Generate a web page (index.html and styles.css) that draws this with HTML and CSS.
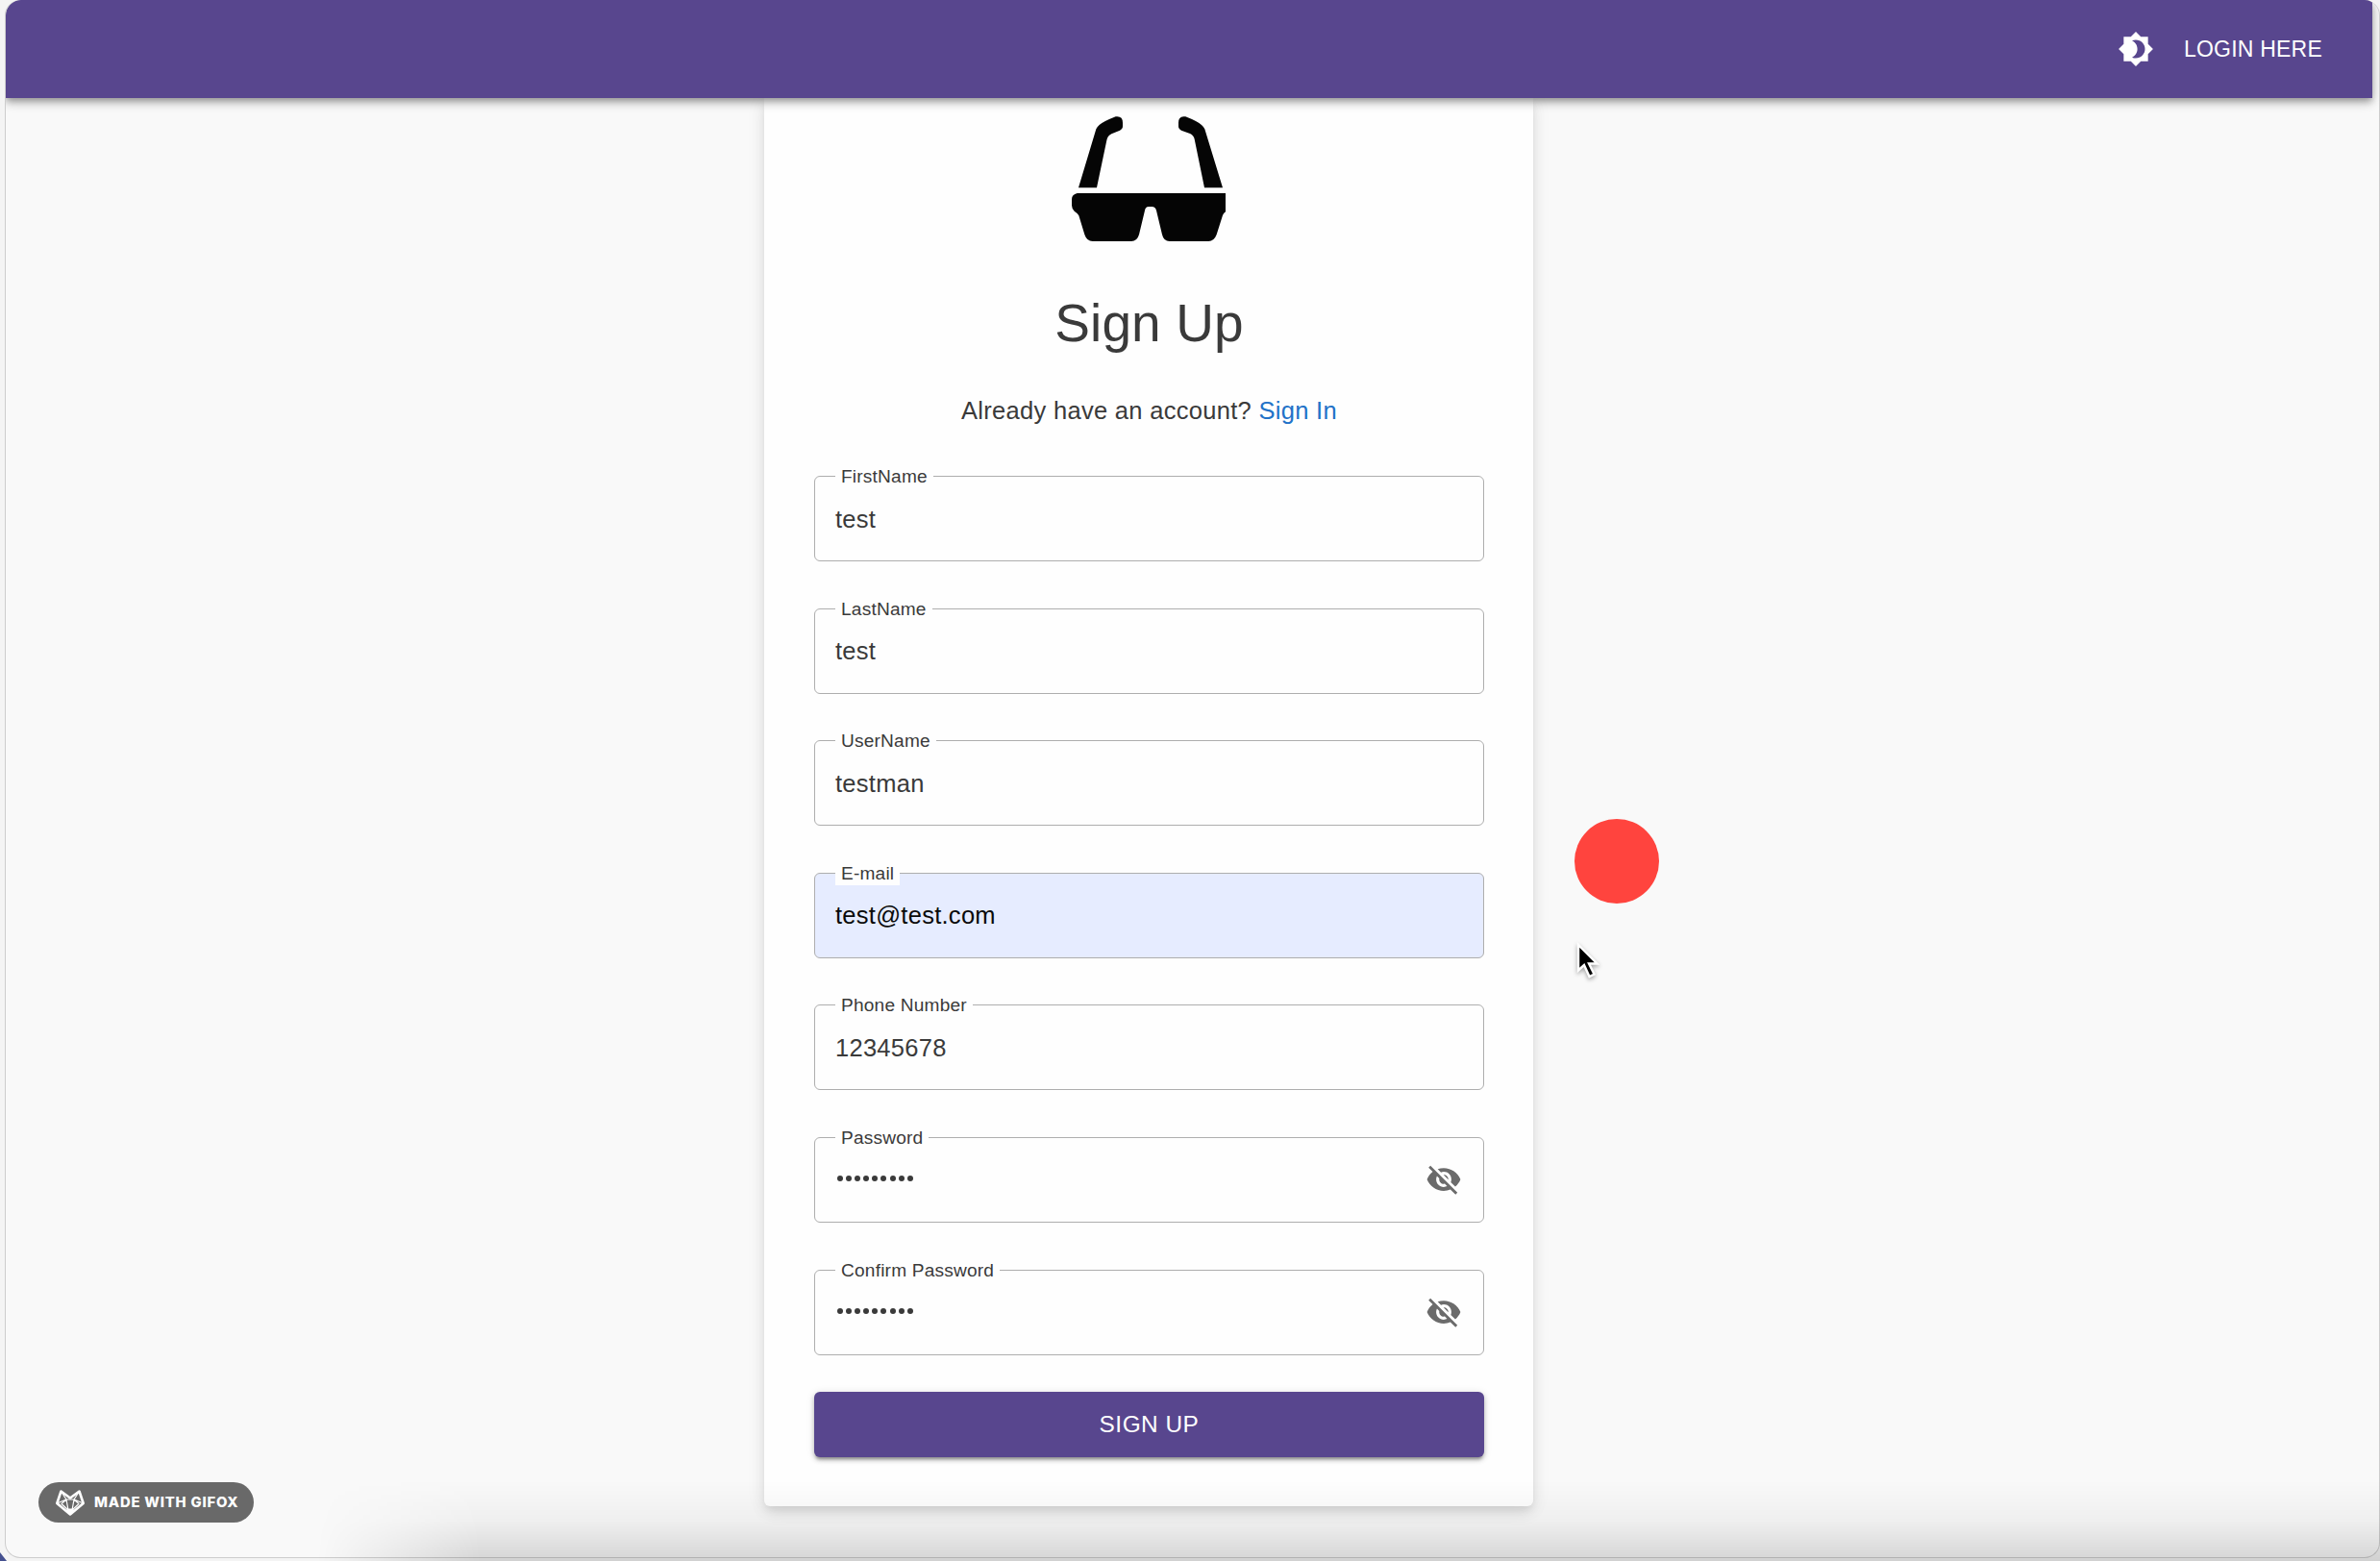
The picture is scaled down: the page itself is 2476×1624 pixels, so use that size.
FILE: index.html
```html
<!DOCTYPE html>
<html lang="en">
<head>
<meta charset="utf-8">
<title>Sign Up</title>
<link rel="stylesheet" href="styles.css">
</head>
<body>
<div class="window">
  <header class="appbar">
    <svg class="theme-icon" viewBox="0 0 24 24"><path d="M20 8.69V4h-4.69L12 .69 8.69 4H4v4.69L.69 12 4 15.31V20h4.69L12 23.31 15.31 20H20v-4.69L23.31 12 20 8.69zM12 18c-.89 0-1.74-.2-2.5-.55C11.56 16.5 13 14.42 13 12s-1.44-4.5-3.5-5.45C10.26 6.2 11.11 6 12 6c3.31 0 6 2.69 6 6s-2.69 6-6 6z"/></svg>
    <a class="login">LOGIN HERE</a>
  </header>
  <main class="card">
    <svg class="glasses" viewBox="165 93 480 390">
      <path d="M186 316 L241 133 Q244 126 251 120 Q264 109 302 94 Q324 91 324 113 V124 Q324 133 315 137 L289 148 Q276 155 274 168 L243 316Z"/>
      <path d="M636 316 L580 133 Q577 126 570 120 Q556 108 520 94 Q498 90 498 113 V124 Q498 133 507 137 L534 147 Q546 153 548 164 L579 316Z"/>
      <path d="M182 333 H645 V391 Q638 396 636 402 L617 462 Q609 483 592 483 H470 Q452 483 447 462 L429 387 Q426 375 415 375 H405 Q395 375 393 387 L375 462 Q369 483 351 483 H230 Q212 483 205 462 L187 403 Q184 396 173 389 Q165 380 165 371 V352 Q165 337 182 333Z"/>
    </svg>
    <h1 class="title">Sign Up</h1>
    <p class="hint">Already have an account? <a class="link">Sign In</a></p>
    <form class="form">
      <div class="field"><label class="label">FirstName</label><span class="value">test</span></div>
      <div class="field"><label class="label">LastName</label><span class="value">test</span></div>
      <div class="field"><label class="label">UserName</label><span class="value">testman</span></div>
      <div class="field autofill"><label class="label">E-mail</label><span class="value">test@test.com</span></div>
      <div class="field"><label class="label">Phone Number</label><span class="value">12345678</span></div>
      <div class="field"><label class="label">Password</label><span class="dots"><i></i><i></i><i></i><i></i><i></i><i></i><i></i><i></i><i></i></span>
        <svg class="eye" viewBox="0 0 24 24"><path d="M12 7c2.76 0 5 2.24 5 5 0 .65-.13 1.26-.36 1.83l2.92 2.92c1.51-1.26 2.7-2.89 3.43-4.75-1.73-4.39-6-7.5-11-7.5-1.4 0-2.74.25-3.98.7l2.16 2.16C10.74 7.13 11.35 7 12 7zM2 4.27l2.28 2.28.46.46C3.08 8.3 1.78 10.02 1 12c1.73 4.39 6 7.5 11 7.5 1.55 0 3.03-.3 4.38-.84l.42.42L19.73 22 21 20.73 3.27 3 2 4.27zM7.53 9.8l1.55 1.55c-.05.21-.08.43-.08.65 0 1.66 1.34 3 3 3 .22 0 .44-.03.65-.08l1.55 1.55c-.67.33-1.41.53-2.2.53-2.76 0-5-2.24-5-5 0-.79.2-1.53.53-2.2zm4.31-.78l3.15 3.15.02-.16c0-1.66-1.34-3-3-3l-.17.01z"/></svg></div>
      <div class="field"><label class="label">Confirm Password</label><span class="dots"><i></i><i></i><i></i><i></i><i></i><i></i><i></i><i></i><i></i></span>
        <svg class="eye" viewBox="0 0 24 24"><path d="M12 7c2.76 0 5 2.24 5 5 0 .65-.13 1.26-.36 1.83l2.92 2.92c1.51-1.26 2.7-2.89 3.43-4.75-1.73-4.39-6-7.5-11-7.5-1.4 0-2.74.25-3.98.7l2.16 2.16C10.74 7.13 11.35 7 12 7zM2 4.27l2.28 2.28.46.46C3.08 8.3 1.78 10.02 1 12c1.73 4.39 6 7.5 11 7.5 1.55 0 3.03-.3 4.38-.84l.42.42L19.73 22 21 20.73 3.27 3 2 4.27zM7.53 9.8l1.55 1.55c-.05.21-.08.43-.08.65 0 1.66 1.34 3 3 3 .22 0 .44-.03.65-.08l1.55 1.55c-.67.33-1.41.53-2.2.53-2.76 0-5-2.24-5-5 0-.79.2-1.53.53-2.2zm4.31-.78l3.15 3.15.02-.16c0-1.66-1.34-3-3-3l-.17.01z"/></svg></div>
      <button class="submit" type="button">SIGN UP</button>
    </form>
  </main>
</div>
<div class="ground-shadow"></div>
<div class="corner"></div>
<div class="record"></div>
<svg class="cursor" viewBox="0 0 26 40"><path d="M2 2V28.5L8 23L13.5 35L18.5 32.5L13 21.5H21.5Z"/></svg>
<div class="badge">
  <svg class="fox" viewBox="0 0 30 27"><path class="head" d="M5.5 1.5L15 8.5L24.5 1.5L28.7 14L15 25.5L1.3 14Z"/><path class="mesh" d="M5.5 1.5L11 10H19L24.5 1.5M1.3 14L11 10L6 14.5L13 21M28.7 14L19 10L24 14.5L17 21M11 10L13 21M19 10L17 21"/><path class="nose" d="M12 19.5H18L19.5 22L15 26L10.500 22Z"/></svg>
  <span class="badge-text">MADE WITH GIFOX</span>
</div>
</body>
</html>
```
FILE: styles.css
```css
* { box-sizing: border-box; }
html, body { height: 100%; }
body {
  margin: 0;
  padding: 0 0 3px 5px;
  position: relative;
  overflow: hidden;
  background: #f4f4f4;
  font-family: "Liberation Sans", Arial, sans-serif;
  color: #3a3a3a;
}
.window {
  height: 1621px;
  border: 1px solid #cdcdcd;
  border-top: 0;
  border-radius: 16px;
  background: #f9f9f9;
  overflow: hidden;
}
.appbar {
  position: relative;
  z-index: 1;
  display: flex;
  align-items: center;
  justify-content: flex-end;
  width: 2462px;
  height: 102px;
  padding-right: 52px;
  border-radius: 16px 0 0 0;
  background: #58468e;
  box-shadow: 0 3px 6px -1px rgba(0,0,0,.25), 0 6px 8px rgba(0,0,0,.16), 0 2px 16px rgba(0,0,0,.12);
  color: #fff;
}
.theme-icon { width: 38px; height: 38px; fill: #fff; }
.login { margin-left: 31px; font-size: 23px; letter-spacing: .22px; line-height: 38px; }
.card {
  width: 800px;
  height: 1465px;
  margin-left: 789px;
  padding: 19px 51px 0 52px;
  border-radius: 0 0 6px 6px;
  background: #fefefe;
  box-shadow: 0 5px 8px -2px rgba(0,0,0,.08), 0 8px 16px rgba(0,0,0,.07), 0 2px 22px rgba(0,0,0,.06);
  display: flex;
  flex-direction: column;
  align-items: center;
}
.glasses { width: 160px; height: 130px; margin-right: 1px; fill: #050505; }
.title { margin: 52px 0 0; font-size: 55px; font-weight: 400; line-height: 67px; letter-spacing: .1px; }
.hint { margin: 38px 0 0; font-size: 25.5px; line-height: 38px; letter-spacing: .3px; white-space: nowrap; }
.link { color: #2272c8; }
.form { width: 697px; margin-top: 49px; display: flex; flex-direction: column; }
.field {
  position: relative;
  display: flex;
  align-items: center;
  height: 89px;
  margin-bottom: 48.600px;
  padding: 0 22px 0 21px;
  border: 1px solid #aeaeae;
  border-radius: 6px;
}
.label {
  position: absolute;
  left: 21px;
  top: -12px;
  padding: 0 6px;
  background: #fefefe;
  font-size: 19.1px;
  line-height: 24px;
  letter-spacing: .2px;
  white-space: nowrap;
}
.value { font-size: 25.5px; line-height: 36px; letter-spacing: .27px; }
.autofill { background: #e6ecff; }
.autofill .value { color: #0a0a0a; }
.dots { display: flex; gap: 3.1px; margin: 0 auto 2px 2px; }
.dots i { width: 6px; height: 6px; border-radius: 50%; background: #3a3a3a; }
.eye { width: 38px; height: 38px; fill: #6b6b6b; }
.submit {
  height: 68px;
  margin-top: -10px;
  padding: 0;
  border: 0;
  border-radius: 6px;
  background: #58468e;
  box-shadow: 0 4px 3px -2px rgba(0,0,0,.25), 0 3px 5px rgba(0,0,0,.22), 0 1px 8px rgba(0,0,0,.12);
  color: #fff;
  font: 400 24.4px/38px "Liberation Sans", Arial, sans-serif;
  letter-spacing: .5px;
}
.ground-shadow {
  position: absolute;
  left: 330px;
  right: 0;
  bottom: 0;
  height: 84px;
  background: linear-gradient(to bottom, rgba(0,0,0,0), rgba(0,0,0,.04) 50%, rgba(0,0,0,.14));
  -webkit-mask-image: linear-gradient(to right, transparent, rgba(0,0,0,.4) 70px, #000 170px);
  mask-image: linear-gradient(to right, transparent, rgba(0,0,0,.4) 70px, #000 170px);
}
.corner {
  position: absolute;
  left: 0;
  bottom: 0;
  width: 7px;
  height: 9px;
  background: #44508f;
  clip-path: polygon(0 0, 100% 100%, 0 100%);
}
.record {
  position: absolute;
  left: 1638px;
  top: 852px;
  width: 88px;
  height: 88px;
  border-radius: 50%;
  background: #ff443e;
}
.cursor {
  position: absolute;
  left: 1639.5px;
  top: 980.5px;
  width: 26px;
  height: 40px;
  overflow: visible;
  fill: #000;
  stroke: #fff;
  stroke-width: 2.4;
  filter: drop-shadow(0 2px 2px rgba(0,0,0,.35));
}
.badge {
  position: absolute;
  left: 40px;
  top: 1542px;
  width: 224px;
  height: 42px;
  padding-left: 18px;
  display: flex;
  align-items: center;
  border-radius: 21px;
  background: #696969;
  color: #fff;
}
.fox { width: 30px; height: 27px; overflow: visible; fill: none; stroke: #fff; stroke-linejoin: round; }
.head { stroke-width: 2.6; }
.mesh { stroke-width: 1.2; }
.nose { fill: #fff; stroke: none; }
.badge-text { margin-left: 10px; font: 800 14.8px/20px Inter, sans-serif; letter-spacing: .8px; white-space: nowrap; }
```
